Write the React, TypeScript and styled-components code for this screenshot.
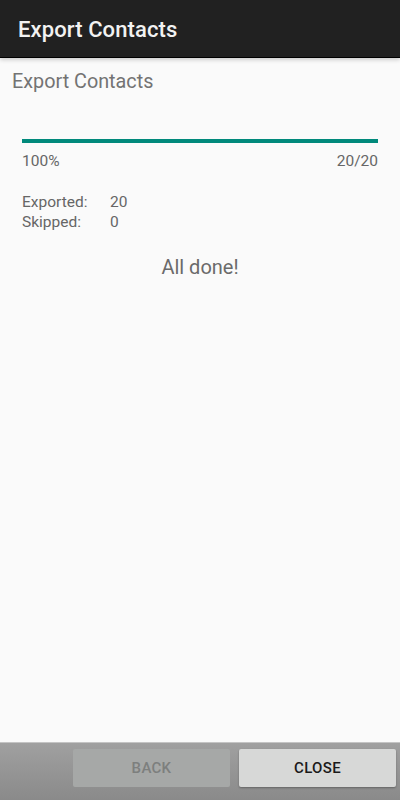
import styled, { createGlobalStyle } from "styled-components";

const GlobalStyle = createGlobalStyle`
  html, body {
    margin: 0;
    padding: 0;
    background: #fafafa;
  }
  #root {
    height: 800px;
  }
`;

/* ------------------ Layout ------------------ */
const Screen = styled.div`
  width: 400px;
  height: 800px;
  display: flex;
  flex-direction: column;
  background: #fafafa;
  font-family: Roboto, "Liberation Sans", sans-serif;
  overflow: hidden;
`;

const ActionBar = styled.header`
  height: 58px;
  flex-shrink: 0;
  background: #212121;
  border-bottom: 1px solid #000;
  box-shadow: 0 2px 4px rgba(0, 0, 0, 0.18);
  display: flex;
  align-items: center;
  padding: 0 18px;
  box-sizing: border-box;
  position: relative;
  z-index: 1;
`;

const ActionTitle = styled.h1`
  margin: 0;
  padding-top: 2px;
  font-size: 22px;
  font-weight: 500;
  color: #f2f2f2;
  letter-spacing: 0.1px;
`;

const Content = styled.main`
  flex: 1;
  display: flex;
  flex-direction: column;
  padding: 11px 22px 0 22px;
`;

const Heading = styled.h2`
  margin: 0 0 0 -10px;
  font-size: 19.8px;
  font-weight: 400;
  color: #737373;
  line-height: 26px;
`;

const Track = styled.div`
  margin-top: 44px;
  height: 4px;
  background: #b2dfdb;
`;

const Fill = styled.div`
  height: 100%;
  background: #00897b;
`;

const ProgressLabels = styled.div`
  display: flex;
  justify-content: space-between;
  margin-top: 8px;
  font-size: 15.5px;
  color: #666;
  line-height: 20px;
`;

const Stats = styled.dl`
  margin: 21px 0 0 0;
  display: grid;
  grid-template-columns: 88px auto;
  font-size: 15.5px;
  color: #666;
  line-height: 20px;
`;

const StatLabel = styled.dt`
  margin: 0;
`;

const StatValue = styled.dd`
  margin: 0;
`;

const Done = styled.p`
  margin: 23px 0 0 0;
  text-align: center;
  font-size: 20px;
  color: #6a6a6a;
  line-height: 24px;
`;

const ButtonBar = styled.footer`
  height: 58px;
  flex-shrink: 0;
  box-sizing: border-box;
  border-top: 1px solid #c4c4c4;
  background: linear-gradient(#a0a0a0, #8a8a8a);
  display: flex;
  justify-content: flex-end;
  align-items: flex-start;
  gap: 9px;
  padding: 6px 4px 0 0;
`;

const BarButton = styled.button<{ $disabled?: boolean }>`
  width: 157px;
  height: 38px;
  border: none;
  border-radius: 2px;
  font-family: Roboto, "Liberation Sans", sans-serif;
  font-size: 15px;
  font-weight: 500;
  letter-spacing: 0.3px;
  background: ${(p) => (p.$disabled ? "#a6a8a7" : "#d7d8d7")};
  color: ${(p) => (p.$disabled ? "#7d7f7e" : "#1a1a1a")};
  box-shadow: ${(p) =>
    p.$disabled ? "none" : "0 1px 2px rgba(0, 0, 0, 0.3)"};
`;

const App = () => {
  const exported = 20;
  const total = 20;
  const pct = Math.round((exported / total) * 100);

  return (
    <Screen>
      <GlobalStyle />
      <ActionBar>
        <ActionTitle>Export Contacts</ActionTitle>
      </ActionBar>
      <Content>
        <Heading>Export Contacts</Heading>
        <Track>
          <Fill style={{ width: `${pct}%` }} />
        </Track>
        <ProgressLabels>
          <span>{pct}%</span>
          <span>
            {exported}/{total}
          </span>
        </ProgressLabels>
        <Stats>
          <StatLabel>Exported:</StatLabel>
          <StatValue>{exported}</StatValue>
          <StatLabel>Skipped:</StatLabel>
          <StatValue>0</StatValue>
        </Stats>
        <Done>All done!</Done>
      </Content>
      <ButtonBar>
        <BarButton $disabled disabled>
          BACK
        </BarButton>
        <BarButton>CLOSE</BarButton>
      </ButtonBar>
    </Screen>
  );
};

export default App;
